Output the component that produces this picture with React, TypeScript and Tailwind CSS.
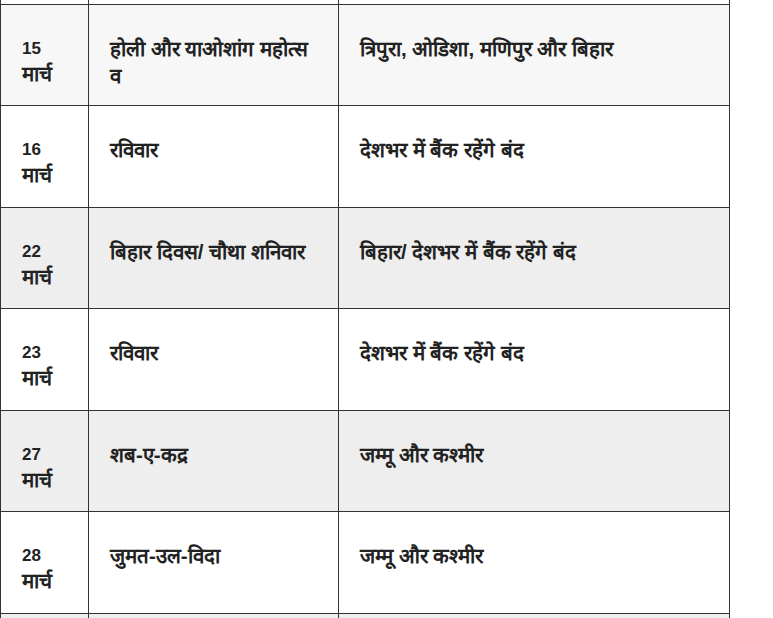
import React from 'react';

type Row = { date: string; month: string; name: React.ReactNode; place: string };

const rows: Row[] = [
  {
    date: '15',
    month: 'मार्च',
    name: (
      <>
        होली और याओशांग महोत्स
        <br />व
      </>
    ),
    place: 'त्रिपुरा, ओडिशा, मणिपुर और बिहार',
  },
  { date: '16', month: 'मार्च', name: 'रविवार', place: 'देशभर में बैंक रहेंगे बंद' },
  { date: '22', month: 'मार्च', name: 'बिहार दिवस/ चौथा शनिवार', place: 'बिहार/ देशभर में बैंक रहेंगे बंद' },
  { date: '23', month: 'मार्च', name: 'रविवार', place: 'देशभर में बैंक रहेंगे बंद' },
  { date: '27', month: 'मार्च', name: 'शब-ए-कद्र', place: 'जम्मू और कश्मीर' },
  { date: '28', month: 'मार्च', name: 'जुमत-उल-विदा', place: 'जम्मू और कश्मीर' },
];

const rowBg = (i: number) => (i === 0 ? 'bg-[#f7f7f7]' : i % 2 === 0 ? 'bg-[#eeeeee]' : 'bg-white');

const cell = 'border border-[#333333] align-top px-[21px] pt-[31px] pb-0';
// Devanagari runs a size up so its glyphs match the reference's Hindi face
const hi = 'text-[20.5px]';

export default function App() {
  return (
    <div
      className="h-[618px] w-[773px] overflow-hidden bg-white text-[#222222]"
      style={{ fontFamily: '"Liberation Sans", Arial, sans-serif' }}
    >
      <table className="w-[730px] table-fixed border-collapse text-[17px] font-bold leading-[25px]">
        <colgroup>
          <col className="w-[88px]" />
          <col className="w-[250px]" />
          <col />
        </colgroup>
        <tbody>
          {/* tail of the row scrolled out above */}
          <tr className="h-[4px] bg-white">
            <td className="border-x border-[#333333] p-0" />
            <td className="border-x border-[#333333] p-0" />
            <td className="border-x border-[#333333] p-0" />
          </tr>
          {rows.map((r, i) => (
            <tr key={r.date} className={`h-[101.5px] ${rowBg(i)}`}>
              <td className={cell}>
                {r.date}
                <br />
                <span className={hi}>{r.month}</span>
              </td>
              <td className={cell}>
                <span className={hi}>{r.name}</span>
              </td>
              <td className={cell}>
                <span className={hi}>{r.place}</span>
              </td>
            </tr>
          ))}
          {/* next row, only its top edge shows */}
          <tr className="h-[101.5px] bg-[#eeeeee]">
            <td className={cell} />
            <td className={cell} />
            <td className={cell} />
          </tr>
        </tbody>
      </table>
    </div>
  );
}
